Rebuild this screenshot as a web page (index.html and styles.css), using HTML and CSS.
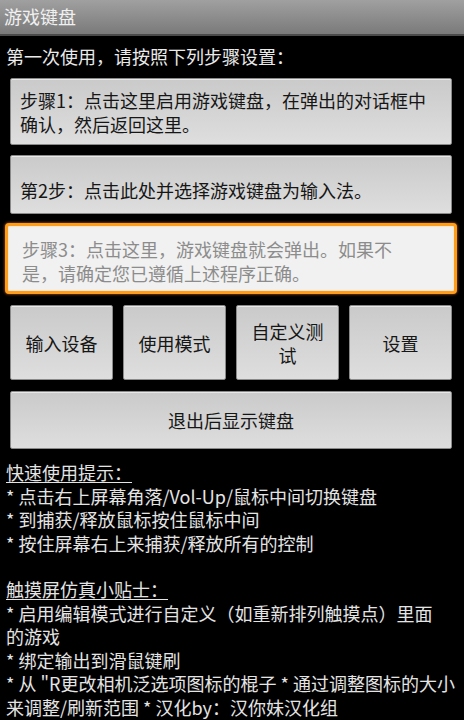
FILE: index.html
```html
<!DOCTYPE html>
<html lang="zh-CN">
<head>
<meta charset="utf-8">
<title>游戏键盘</title>
<link rel="stylesheet" href="styles.css">
</head>
<body>
<header class="titlebar">游戏键盘</header>
<main class="content">
  <p class="intro">第一次使用，请按照下列步骤设置：</p>
  <div class="steps">
    <button class="btn step step1">步骤1：点击这里启用游戏键盘，在弹出的对话框中确认，然后返回这里。</button>
    <button class="btn step step2">第2步：点击此处并选择游戏键盘为输入法。</button>
    <button class="btn step step3">步骤3：点击这里，游戏键盘就会弹出。如果不是，请确定您已遵循上述程序正确。</button>
    <div class="row">
      <button class="btn small">输入设备</button>
      <button class="btn small">使用模式</button>
      <button class="btn small">自定义测试</button>
      <button class="btn small">设置</button>
    </div>
    <button class="btn wide">退出后显示键盘</button>
  </div>
  <section class="tips">
    <h2 class="tips-title">快速使用提示：</h2>
    <p>* 点击右上屏幕角落/Vol-Up/鼠标中间切换键盘</p>
    <p>* 到捕获/释放鼠标按住鼠标中间</p>
    <p>* 按住屏幕右上来捕获/释放所有的控制</p>
  </section>
  <section class="tips">
    <h2 class="tips-title">触摸屏仿真小贴士：</h2>
    <p>* 启用编辑模式进行自定义（如重新排列触摸点）里面<br>的游戏</p>
    <p>* 绑定输出到滑鼠键刷</p>
    <p>* 从 "R更改相机泛选项图标的棍子 * 通过调整图标的大小来调整/刷新范围 * 汉化by：汉你妹汉化组</p>
  </section>
</main>
</body>
</html>
```

FILE: styles.css
```css
* { box-sizing: border-box; }
html, body {
  margin: 0;
  padding: 0;
  background: #000;
}
body {
  width: 464px;
  height: 720px;
  overflow: hidden;
  font-family: "Noto Sans CJK SC", "Noto Sans", sans-serif;
  font-size: 18px;
  color: #e4e4e4;
}
.titlebar {
  height: 36px;
  line-height: 33px;
  padding-left: 4px;
  font-size: 18px;
  color: #f0f0f0;
  background: linear-gradient(#a0a0a0, #7a7a7a);
  border-bottom: 2px solid #4a4a4a;
}
.content {
  padding: 0;
}
.intro {
  margin: 8px 0 0 6px;
  line-height: 24px;
  color: #eaeaea;
}
.steps {
  display: flex;
  flex-direction: column;
  margin: 10px 12px 0 10px;
}
.btn {
  font-family: "Noto Sans CJK SC", "Noto Sans", sans-serif;
  font-size: 18px;
  line-height: 24px;
  color: #161616;
  background: linear-gradient(#cacaca, #dedede);
  border: 1px solid #8a8a8a;
  border-radius: 2px;
  padding: 0;
  margin: 0;
  box-shadow: inset 0 1px 0 #e8e8e8;
}
.step {
  text-align: left;
  padding: 9px 12px 9px 9px;
  height: 67px;
}
.step2 {
  margin-top: 10px;
  height: 59px;
  padding-top: 14px;
  padding-bottom: 4px;
}
.step3 {
  margin: 9px -5px 0 -5px;
  height: 71px;
  padding: 11px 28px 11px 14px;
  color: #8c8c8c;
  background: #f1f1f1;
  border: 3px solid #ff9c1a;
  border-radius: 4px;
  box-shadow: 0 0 3px #c86a00, inset 0 0 2px #ffd08a;
}
.row {
  display: grid;
  grid-template-columns: repeat(4, 1fr);
  gap: 10px;
  margin-top: 11px;
}
.small {
  height: 75px;
  padding: 0 12px;
  text-align: center;
}
.wide {
  margin-top: 11px;
  height: 58px;
  text-align: center;
}
.tips {
  margin: 12px 8px 0 6px;
}
.tips + .tips {
  margin-top: 23px;
}
.tips-title {
  margin: 0;
  font-size: 18px;
  font-weight: normal;
  line-height: 23.5px;
  text-decoration: underline;
  text-underline-offset: 2px;
}
.tips p {
  margin: 0;
  line-height: 23.5px;
}
```
